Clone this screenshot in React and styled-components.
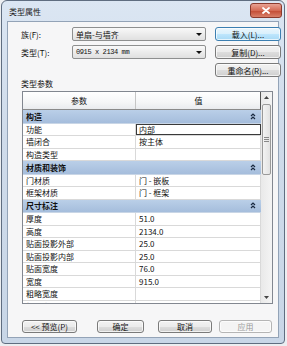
import React from 'react'
import styled, { createGlobalStyle } from 'styled-components'

const GlobalStyle = createGlobalStyle`
  html, body {
    margin: 0;
    padding: 0;
    background: #eceef1;
  }
  body {
    font-family: "Noto Sans CJK SC", "Noto Sans", sans-serif;
    font-size: 8px;
    color: #111;
  }
`

const Window = styled.div`
  width: 284px;
  height: 344px;
  margin-left: 1px;
  box-sizing: border-box;
  border: 1px solid #5f6d80;
  border-radius: 6px 6px 4px 4px;
  background: linear-gradient(#dbe6f3, #cfdbea 40%, #c8d6e7);
  display: flex;
  flex-direction: column;
  padding: 0 5px 5px 5px;
`

const TitleBar = styled.div`
  height: 20px;
  display: flex;
  align-items: center;
  justify-content: space-between;
  padding-left: 2px;
`

const Title = styled.span`
  font-size: 8px;
  color: #1a1a1a;
  margin-top: 1px;
`

const CloseButton = styled.div`
  width: 30px;
  height: 13px;
  margin-right: -3px;
  margin-top: -1px;
  border: 1px solid #8a3a2e;
  border-radius: 3px;
  background: linear-gradient(#e8a293, #d46a55 50%, #c24a33 51%, #d8806a);
  display: flex;
  align-items: center;
  justify-content: center;
`

const Client = styled.div`
  flex: 1;
  border: 1px solid #93a3b7;
  background: #f6f6f7;
  display: flex;
  flex-direction: column;
  padding: 5px 5px 0 13px;
`

const TopGrid = styled.div`
  display: grid;
  grid-template-columns: 42px 134px 66px;
  grid-template-rows: 14px 14px 14px;
  column-gap: 9px;
  row-gap: 4px;
  align-items: center;
`

const Label = styled.span`
  font-size: 8px;
  white-space: nowrap;
`

const Select = styled.div`
  height: 14px;
  box-sizing: border-box;
  border: 1px solid #8e8f8f;
  border-radius: 2px;
  background: linear-gradient(#f9f9f9, #ececec 50%, #e0e0e0);
  display: flex;
  align-items: center;
  justify-content: space-between;
  padding: 0 3px 0 3px;
  font-size: 8px;
`

const MonoText = styled.span`
  font-family: "Liberation Mono", "DejaVu Sans Mono", monospace;
  font-size: 7px;
  letter-spacing: -0.4px;
`

const Arrow = styled.span`
  width: 0;
  height: 0;
  border-left: 3px solid transparent;
  border-right: 3px solid transparent;
  border-top: 3px solid #111;
`

const Button = styled.div`
  width: ${p => p.$w}px;
  height: ${p => p.$h || 14}px;
  margin-left: ${p => p.$ml || 0}px;
  box-sizing: border-box;
  border: 1px solid ${p => (p.$focus ? '#3c7fb1' : p.$disabled ? '#b5b5b5' : '#7a7a7a')};
  border-radius: 3px;
  background: ${p =>
    p.$focus
      ? 'linear-gradient(#eaf6fd, #d9f0fc 50%, #bee6fd 51%, #a7d9f5)'
      : p.$disabled
        ? '#f4f4f4'
        : 'linear-gradient(#f2f2f2, #ebebeb 50%, #dddddd 51%, #cfcfcf)'};
  box-shadow: inset 0 0 0 1px rgba(255, 255, 255, 0.7);
  display: flex;
  align-items: center;
  justify-content: center;
  font-size: 8px;
  color: ${p => (p.$disabled ? '#9a9a9a' : '#111')};
  white-space: nowrap;
`

const SectionLabel = styled.div`
  margin-top: 1px;
  line-height: 12px;
  font-size: 8px;
`

const Table = styled.div`
  margin-top: 1px;
  margin-left: 1px;
  width: 251px;
  height: 213px;
  box-sizing: border-box;
  border: 1px solid #828790;
  background: #fff;
  display: flex;
`

const Grid = styled.div`
  width: 238px;
  overflow: hidden;
  display: flex;
  flex-direction: column;
`

const HeaderRow = styled.div`
  height: 18px;
  flex-shrink: 0;
  display: grid;
  grid-template-columns: 113px 125px;
  box-sizing: border-box;
  border-bottom: 1px solid #8a8a8a;
  border-right: 1px solid #555;
  background: linear-gradient(#ffffff, #f5f6f7 60%, #e9ebee);
`

const HeaderCell = styled.div`
  display: flex;
  align-items: center;
  justify-content: center;
  font-size: 8px;
  border-right: ${p => (p.$last ? 'none' : '1px solid #c5c5c5')};
`

const GroupRow = styled.div`
  height: 13.5px;
  flex-shrink: 0;
  box-sizing: border-box;
  background: linear-gradient(#bacfe8, #a5bddc);
  border-bottom: 1px solid #c9d6e6;
  display: flex;
  align-items: center;
  justify-content: space-between;
  padding: 0 5px 0 3px;
  font-size: 8px;
  font-weight: bold;
  color: #111;
`

const Row = styled.div`
  height: 12.5px;
  flex-shrink: 0;
  display: grid;
  grid-template-columns: 113px 125px;
  box-sizing: border-box;
  border-bottom: 1px solid #d9d9d9;
`

const Cell = styled.div`
  display: flex;
  align-items: center;
  padding-left: 3px;
  font-size: 8px;
  white-space: nowrap;
  box-sizing: border-box;
  border-right: 1px solid #d9d9d9;
  ${p => p.$active && 'outline: 1px solid #3a3a3a; outline-offset: -1px; border-right: 1px solid #3a3a3a;'}
`

const ScrollBar = styled.div`
  width: 11px;
  background: linear-gradient(90deg, #e9e9e9, #f4f4f4);
  display: flex;
  flex-direction: column;
  align-items: center;
`

const ScrollArrow = styled.div`
  height: 11px;
  display: flex;
  align-items: center;
  justify-content: center;
  flex-shrink: 0;
`

const Thumb = styled.div`
  width: 9px;
  height: 71px;
  margin-top: 1px;
  box-sizing: border-box;
  border: 1px solid #9a9a9a;
  border-radius: 2px;
  background: linear-gradient(90deg, #f3f3f3, #e2e2e2);
  display: flex;
  align-items: center;
  justify-content: center;
`

const Grip = styled.div`
  width: 5px;
  height: 5px;
  background: repeating-linear-gradient(#888 0 1px, transparent 1px 2px);
`

const Spacer = styled.div`
  flex: 1;
`

const ButtonBar = styled.div`
  display: flex;
  align-items: center;
  margin-top: 16px;
  padding-left: 1px;
`

function Collapse() {
  return (
    <svg width="6" height="7" viewBox="0 0 6 7">
      <path d="M1 3 L3 1 L5 3 M1 6 L3 4 L5 6" fill="none" stroke="#1a2a40" strokeWidth="1.2" />
    </svg>
  )
}

function TriUp({ down }) {
  return (
    <svg width="5" height="3" viewBox="0 0 5 3">
      <path d={down ? 'M0 0 H5 L2.5 3 Z' : 'M0 3 H5 L2.5 0 Z'} fill="#444" />
    </svg>
  )
}

const groups = [
  {
    name: '构造',
    rows: [
      ['功能', '内部', true],
      ['墙闭合', '按主体'],
      ['构造类型', ''],
    ],
  },
  {
    name: '材质和装饰',
    rows: [
      ['门材质', '门 - 嵌板'],
      ['框架材质', '门 - 框架'],
    ],
  },
  {
    name: '尺寸标注',
    rows: [
      ['厚度', '51.0'],
      ['高度', '2134.0'],
      ['贴面投影外部', '25.0'],
      ['贴面投影内部', '25.0'],
      ['贴面宽度', '76.0'],
      ['宽度', '915.0'],
      ['粗略宽度', ''],
      ['粗略高度', ''],
    ],
  },
]

export default function App() {
  return (
    <>
      <GlobalStyle />
      <Window>
        <TitleBar>
          <Title>类型属性</Title>
          <CloseButton>
            <svg width="8" height="7" viewBox="0 0 8 7">
              <path d="M1 1 L7 6 M7 1 L1 6" stroke="#fff" strokeWidth="1.8" strokeLinecap="round" />
            </svg>
          </CloseButton>
        </TitleBar>
        <Client>
          <TopGrid>
            <Label>族(F):</Label>
            <Select>
              <span>单扇-与墙齐</span>
              <Arrow />
            </Select>
            <Button $w={66} $focus>载入(L)...</Button>
            <Label>类型(T):</Label>
            <Select>
              <MonoText>0915 x 2134 mm</MonoText>
              <Arrow />
            </Select>
            <Button $w={66}>复制(D)...</Button>
            <span />
            <span />
            <Button $w={66}>重命名(R)...</Button>
          </TopGrid>

          <SectionLabel>类型参数</SectionLabel>

          <Table>
            <Grid>
              <HeaderRow>
                <HeaderCell>参数</HeaderCell>
                <HeaderCell $last>值</HeaderCell>
              </HeaderRow>
              {groups.map(g => (
                <React.Fragment key={g.name}>
                  <GroupRow>
                    <span>{g.name}</span>
                    <Collapse />
                  </GroupRow>
                  {g.rows.map(([param, value, active]) => (
                    <Row key={param}>
                      <Cell>{param}</Cell>
                      <Cell $active={active}>{value}</Cell>
                    </Row>
                  ))}
                </React.Fragment>
              ))}
            </Grid>
            <ScrollBar>
              <ScrollArrow><TriUp /></ScrollArrow>
              <Thumb><Grip /></Thumb>
              <Spacer />
              <ScrollArrow><TriUp down /></ScrollArrow>
            </ScrollBar>
          </Table>

          <ButtonBar>
            <Button $w={55} $h={13}>&lt;&lt; 预览(P)</Button>
            <Button $w={47} $h={13} $ml={20}>确定</Button>
            <Button $w={54} $h={13} $ml={14}>取消</Button>
            <Button $w={53} $h={13} $ml={7} $disabled>应用</Button>
          </ButtonBar>
        </Client>
      </Window>
    </>
  )
}
